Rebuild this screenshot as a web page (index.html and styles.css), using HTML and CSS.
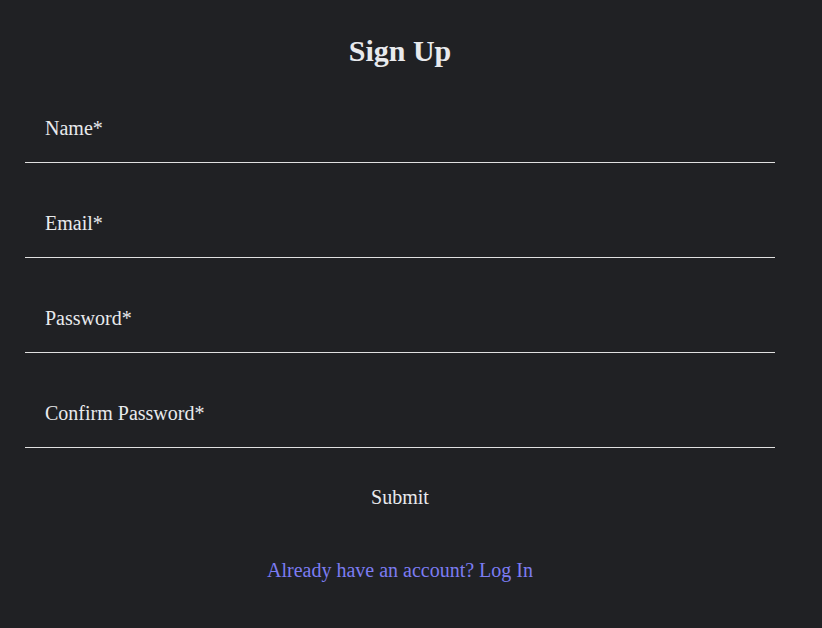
FILE: index.html
```html
<!DOCTYPE html>
<html lang="en">
<head>
<meta charset="utf-8">
<title>Sign Up</title>
<link rel="stylesheet" href="styles.css">
</head>
<body>
<main class="signup">
  <h1 class="title">Sign Up</h1>
  <form class="form">
    <div class="field"><span class="label">Name*</span></div>
    <div class="field"><span class="label">Email*</span></div>
    <div class="field"><span class="label">Password*</span></div>
    <div class="field"><span class="label">Confirm Password*</span></div>
    <button type="button" class="submit">Submit</button>
  </form>
  <p class="switch"><a class="link">Already have an account? Log In</a></p>
</main>
</body>
</html>
```

FILE: styles.css
```css
html, body {
  margin: 0;
  padding: 0;
  background: #202124;
}
body {
  font-family: "Liberation Serif", "Times New Roman", serif;
  color: #e8eaed;
  font-size: 20px;
}
.signup {
  width: 750px;
  margin-left: 25px;
  padding-top: 34px;
  display: flex;
  flex-direction: column;
}
.title {
  margin: 0;
  font-size: 30px;
  font-weight: bold;
  text-align: center;
  line-height: 34px;
}
.form {
  margin-top: 25px;
  display: flex;
  flex-direction: column;
  gap: 25px;
}
.field {
  padding: 24px 20px 22px;
  border-bottom: 1px solid #e0e0e0;
  line-height: 23px;
}
.label {
  color: #e8eaed;
}
.submit {
  align-self: center;
  background: none;
  border: none;
  color: #e8eaed;
  font-family: inherit;
  font-size: 20px;
  line-height: 23px;
  padding: 0;
  margin-top: 13px;
}
.switch {
  margin: 50px 0 0;
  text-align: center;
  line-height: 23px;
}
.link {
  color: #7c7cf2;
}
```
